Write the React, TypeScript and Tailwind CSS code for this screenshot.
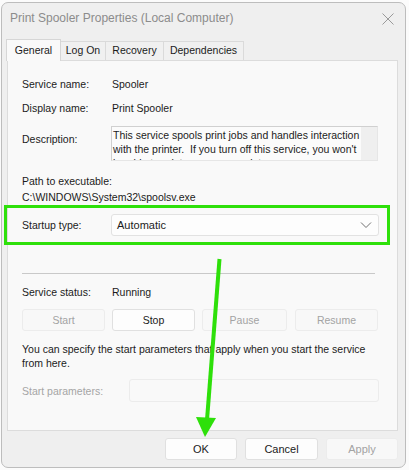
import React from "react";

const font = { fontFamily: '"Liberation Sans", Arial, sans-serif' };

function Btn({ label, disabled, className }: { label: string; disabled?: boolean; className?: string }) {
  return (
    <div
      className={
        "flex items-center justify-center rounded-[3px] border h-[22px] text-[10.5px] " +
        (disabled
          ? "border-[#ececec] bg-[#f8f8f8] text-[#a3a3a3] "
          : "border-[#e0e0e0] bg-[#fdfdfd] text-[#1b1b1b] ") +
        (className ?? "")
      }
    >
      {label}
    </div>
  );
}

export default function App() {
  return (
    <div className="relative w-[409px] h-[470px] bg-[#fbfbfb] overflow-hidden" style={font}>
      <div className="ml-[1px] mt-[2px] w-[405px] h-[466px] rounded-[7px] border border-[#bdbdbd] bg-[#efefef] flex flex-col">
        {/* Title bar */}
        <div className="flex items-center justify-between h-[30px] pl-[8px] pr-[10px]">
          <span className="text-[12px] text-[#8c8c8c]">Print Spooler Properties (Local Computer)</span>
          <svg width="14" height="14" viewBox="0 0 14 14" className="mt-[2px]">
            <path d="M1.5 1.5 L12.5 12.5 M12.5 1.5 L1.5 12.5" stroke="#9a9a9a" strokeWidth="1" />
          </svg>
        </div>
        {/* Tabs */}
        <div className="flex items-end h-[27px] pl-[4px] text-[10.5px] text-[#1b1b1b]">
          <div className="relative z-10 h-[22px] w-[55px] -mb-px flex items-center justify-center border border-b-0 border-[#d6d6d6] bg-[#f9f9f9]">
            General
          </div>
          <div className="h-[19px] w-[45px] flex items-center justify-center border border-l-0 border-b-0 border-[#dadada] bg-[#f0f0f0]">
            Log On
          </div>
          <div className="h-[19px] w-[58px] flex items-center justify-center border border-l-0 border-b-0 border-[#dadada] bg-[#f0f0f0]">
            Recovery
          </div>
          <div className="h-[19px] w-[80px] flex items-center justify-center border border-l-0 border-b-0 border-[#dadada] bg-[#f0f0f0]">
            Dependencies
          </div>
        </div>
        {/* Panel */}
        <div className="ml-[5px] w-[391px] h-[371px] border border-[#dcdcdc] bg-[#f9f9f9] pl-[14px] pr-[18px] pt-[15px] text-[10.5px] text-[#1b1b1b] leading-[16px]">
          <div className="flex">
            <div className="w-[90px]">Service name:</div>
            <div>Spooler</div>
          </div>
          <div className="flex mt-[8px]">
            <div className="w-[90px]">Display name:</div>
            <div>Print Spooler</div>
          </div>
          <div className="flex mt-[10px]">
            <div className="w-[89px] pt-[5px]">Description:</div>
            <div className="flex w-[267px] h-[35px] border border-[#d0d0d0] border-r-[#e6e6e6] border-b-[#e6e6e6] bg-[#fbfbfb] overflow-hidden">
              <div className="flex-1 pl-[1px] pt-[1px] leading-[14px] overflow-hidden">
                This service spools print jobs and handles interaction with the printer.&nbsp; If you turn off this service, you won't be able to print or see your printers.
              </div>
              <div className="w-[16px] shrink-0 bg-[#efefef]" />
            </div>
          </div>
          <div className="mt-[12px]">Path to executable:</div>
          <div>C:\WINDOWS\System32\spoolsv.exe</div>
          <div className="flex items-center mt-[9px]">
            <div className="w-[89px]">Startup type:</div>
            <div className="flex items-center justify-between w-[268px] h-[22px] rounded-[3px] border border-[#e2e2e2] bg-[#fdfdfd] pl-[5px] pr-[6px]">
              <span className="text-[11px]">Automatic</span>
              <svg width="12" height="8" viewBox="0 0 12 8">
                <path d="M1 1.5 L6 6.5 L11 1.5" fill="none" stroke="#707070" strokeWidth="1" />
              </svg>
            </div>
          </div>
          <div className="mt-[37px] w-[353px] h-px bg-[#c9c9c9]" />
          <div className="flex mt-[10px]">
            <div className="w-[90px]">Service status:</div>
            <div>Running</div>
          </div>
          <div className="flex mt-[9px]">
            <Btn label="Start" disabled className="w-[83px]" />
            <Btn label="Stop" className="w-[83px] ml-[7px]" />
            <Btn label="Pause" disabled className="w-[85px] ml-[7px]" />
            <Btn label="Resume" disabled className="w-[83px] ml-[8px]" />
          </div>
          <div className="mt-[11px] leading-[14px]">
            You can specify the start parameters that apply when you start the service from here.
          </div>
          <div className="flex items-center mt-[9px]">
            <div className="w-[107px] text-[#a5a5a5]">Start parameters:</div>
            <div className="w-[250px] h-[23px] rounded-[3px] border border-[#ececec] bg-[#f9f9f9]" />
          </div>
        </div>
        {/* Bottom buttons */}
        <div className="flex justify-end gap-[8px] pr-[7px] mt-[7px]">
          <Btn label="OK" className="w-[72px] text-[11px]" />
          <Btn label="Cancel" className="w-[73px] text-[11px]" />
          <Btn label="Apply" disabled className="w-[72px] text-[11px]" />
        </div>
      </div>

      {/* Annotation: highlight box */}
      <div className="absolute left-[4px] top-[205px] w-[386px] h-[40px] border-[3px] border-[#2ee00a] pointer-events-none" />
      {/* Annotation: arrow */}
      <svg className="absolute left-0 top-0 pointer-events-none" width="409" height="470" viewBox="0 0 409 470">
        <line x1="219.5" y1="259" x2="207" y2="420" stroke="#2ee00a" strokeWidth="4" />
        <polygon points="196,417 216,418 205,437" fill="#2ee00a" />
      </svg>
    </div>
  );
}
